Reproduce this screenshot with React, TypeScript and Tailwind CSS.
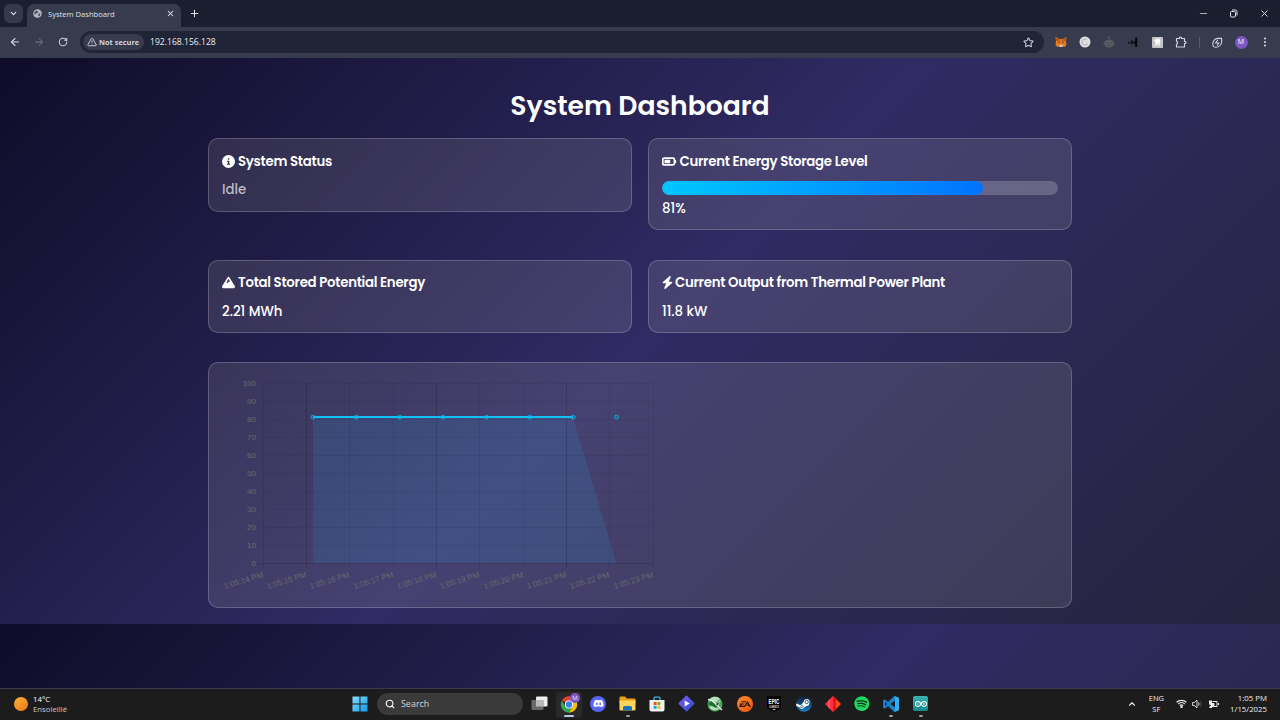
import type { ReactNode } from "react";
import { ArrowLeft, ArrowRight, ChevronDown, ChevronUp, Minus, MoreVertical, Plus, RotateCw, Search, Star, TriangleAlert, X } from "lucide-react";
import { FaBolt, FaCircleInfo, FaDiscord, FaMountain, FaSpotify } from "react-icons/fa6";
import { SiArduino, SiEa } from "react-icons/si";

function TabStrip() {
  return (
    <div className="flex h-[27px] items-end bg-[#1a1f30] text-[#dfe2ec]">
      <div className="mb-[4px] ml-[4px] flex h-[19px] w-[19px] items-center justify-center rounded-[6px] bg-[#343a4b]">
        <ChevronDown size={9} strokeWidth={3} />
      </div>
      <div className="ml-[4px] flex h-[23px] w-[154px] items-center rounded-t-[7px] bg-[#363b4d] pr-[6px] pb-[4px] pl-[6px]">
        <svg width="9" height="9" viewBox="0 0 18 18">
          <circle cx="9" cy="9" r="8.6" fill="#b4b9c4" />
          <path d="M4 5l4-2 2 2-1 3-3 1-1 2-3-2zM11 9l4 0-1 4-3 2-1-3z" fill="#4d5262" />
        </svg>
        <span className="ml-[6px] flex-1 text-[7.6px] leading-[12px]">System Dashboard</span>
        <X size={9} strokeWidth={2.8} />
      </div>
      <Plus className="mb-[8px] ml-[8px]" size={11} strokeWidth={2.2} />
      <div className="flex-1" />
      <div className="mb-[8px] flex items-center">
        <Minus className="mr-[20px]" size={11} strokeWidth={1.6} />
        <svg className="mr-[21px]" width="9" height="9" viewBox="0 0 9 9" fill="none" stroke="currentColor">
          <rect x="1.5" y="2.5" width="5" height="5.5" rx="1" />
          <path d="M3 1h3.5a1.5 1.5 0 0 1 1.5 1.5v4" />
        </svg>
        <X className="mr-[10px]" size={11} strokeWidth={2} />
      </div>
    </div>
  );
}

function ToolCell({ children }: { children: ReactNode }) {
  return <div className="flex w-[24px] items-center justify-center">{children}</div>;
}

function Toolbar() {
  return (
    <div className="flex h-[31px] items-center bg-[#363b4d] text-[#d0d4e0]">
      <div className="flex w-[80px] pb-px pl-[9px]">
        <ArrowLeft size={12} strokeWidth={2.2} />
        <ArrowRight className="ml-[12px] text-[#74798a]" size={12} strokeWidth={2} />
        <RotateCw className="mt-px ml-[13px]" size={10} strokeWidth={2.5} />
      </div>
      <div className="mb-px flex h-[22px] w-[964px] items-center rounded-full bg-[#1f2436] pr-[10px] pl-[3px]">
        <div className="flex h-[16px] w-[61px] items-center rounded-full bg-[#363b4d] pl-[4px]">
          <TriangleAlert size={10} strokeWidth={2.2} />
          <span className="ml-[2px] text-[7.4px] leading-[12px] font-bold whitespace-nowrap">Not secure</span>
        </div>
        <span className="ml-[6px] flex-1 text-[8.6px] leading-[12px] text-[#eceef4]">192.168.156.128</span>
        <Star size={11} strokeWidth={2.2} />
      </div>
      <div className="mb-px ml-[5px] flex h-[16px] items-center">
        <ToolCell>
          <svg width="12" height="12" viewBox="0 0 24 24">
            <path d="M1 2l8 4h6l8-4-1 8 1 7-3 5-5-1h-6l-5 1-3-5 1-7z" fill="#e8781e" />
            <path d="M1 2l8 4 1 5-7-1zM23 2l-8 4-1 5 7-1z" fill="#b3581a" />
            <path d="M8 16l4 2 4-2-1 6H9z" fill="#d8c7b6" />
            <path d="M6 12l4 1-1 2zM18 12l-4 1 1 2z" fill="#26303e" />
          </svg>
        </ToolCell>
        <ToolCell>
          <svg width="12" height="12" viewBox="0 0 24 24">
            <circle cx="12" cy="12" r="11" fill="#dedede" />
            <path d="M16 8a6 6 0 1 0 1 7" fill="none" stroke="#bcbcbc" strokeWidth="2.4" />
          </svg>
        </ToolCell>
        <ToolCell>
          <svg width="12" height="12" viewBox="0 0 24 24" fill="#595b61">
            <circle cx="12" cy="3" r="2.2" />
            <path d="M11 4h2v4h3c3 0 5 3 5 5h2v4h-2c0 3-3 6-6 6H9c-3 0-6-3-6-6H1v-4h2c0-2 2-5 5-5h3z" />
            <path d="M7 13h3v2H7zM14 13h3v2h-3zM8 18h8v2H8z" fill="#454850" />
          </svg>
        </ToolCell>
        <ToolCell>
          <svg width="10" height="10" viewBox="0 0 10 10" fill="#07080c">
            <path d="M0 5h1.600v1.600H0zM2.800 3.500H4.600v3.600H2.800zM5.600 4h1.600V.5h2V10h-2V7H5.600z" />
          </svg>
        </ToolCell>
        <ToolCell>
          <svg width="11" height="11" viewBox="0 0 22 22">
            <rect width="22" height="22" rx="2" fill="#c4c5c7" />
            <path d="M8 4v14M5 8l6-4v6l4-5v6c0 2-3 2-7 2M14 12v6" fill="none" stroke="#fff" strokeWidth="2.4" />
          </svg>
        </ToolCell>
        <ToolCell>
          <svg width="12" height="12" viewBox="0 0 24 24" fill="none" stroke="currentColor" strokeWidth="2.4">
            <path d="M3 5h6V4a2 2 0 0 1 4 0v1h6v6h1a2 2 0 0 1 0 4h-1v7H3v-6c3 0 3-5 0-5z" strokeLinejoin="round" />
          </svg>
        </ToolCell>
        <div className="mx-[5.500px] h-[11px] w-px bg-[#555b70]" />
        <ToolCell>
          <svg width="11" height="11" viewBox="0 0 24 24" fill="none" stroke="currentColor" strokeWidth="2.300">
            <path d="M3 21c-3-7 0-17 9-18h9v9c-1 9-11 12-18 9z" strokeLinejoin="round" />
            <path d="M13 6l-5 7h7l-4 6" />
          </svg>
        </ToolCell>
        <ToolCell>
          <span className="flex h-[13px] w-[13px] items-center justify-center rounded-full bg-[#7e57c2] text-[7px] text-white">M</span>
        </ToolCell>
        <ToolCell>
          <MoreVertical size={12} strokeWidth={2.4} />
        </ToolCell>
      </div>
    </div>
  );
}

function Card({ children, className }: { children: ReactNode; className: string }) {
  return (
    <section className={`rounded-[10px] border border-white/20 bg-[#fff6e6]/11 ${className}`}>
      {children}
    </section>
  );
}

function CardTitle({ icon, children, className }: { icon: ReactNode; children: ReactNode; className: string }) {
  return (
    <h2 className="flex h-[20px] items-center text-[13.33px] leading-[20px] font-semibold tracking-[-0.28px] whitespace-nowrap text-white">
      {icon}
      <span className={className}>{children}</span>
    </h2>
  );
}

function BatteryIcon() {
  return (
    <svg width="14.500" height="13" viewBox="0 0 14.500 13" fill="#fff">
      <rect x=".8" y="3.100" width="11.600" height="6.800" rx="1.300" fill="none" stroke="#fff" strokeWidth="1.700" />
      <path d="M2.500 4.800h5.700v3.500H2.500zM12.800 4.900h.7a.7.700 0 0 1 .7.700v2a.7.700 0 0 1-.7.700h-.7z" />
    </svg>
  );
}

const TICKS = [
  { sec: 14, x: 54.5 },
  { sec: 15, x: 97.5 },
  { sec: 16, x: 140.5 },
  { sec: 17, x: 184.5 },
  { sec: 18, x: 227.5 },
  { sec: 19, x: 270.5 },
  { sec: 20, x: 314.5 },
  { sec: 21, x: 357.5 },
  { sec: 22, x: 400.5 },
  { sec: 23, x: 444.5 },
];
const LEVELS = [100, 90, 80, 70, 60, 50, 40, 30, 20, 10, 0];
const POINTS = [0, 1, 2, 3, 4, 5, 6, 7];

function Chart() {
  return (
    <svg className="block" width="450" height="244" viewBox="0 0 450 244" fontFamily="'Liberation Sans', Arial, sans-serif" fontSize="8">
      <path d="M104 54.500H364L407.300 200H104z" fill="#1cb4ff" fillOpacity=".125" />
      {LEVELS.map((level, i) => (
        <g key={level}>
          <path d={`M49 ${20.5 + i * 18}H444`} stroke="#000" strokeOpacity={level === 0 ? 0.14 : 0.06} />
          <text x="47" y={22.5 + i * 18} textAnchor="end" fill="#6a6a6e">{level}</text>
        </g>
      ))}
      {TICKS.map(({ sec, x }, i) => (
        <g key={sec}>
          <path d={`M${x} 20V205`} stroke="#000" strokeOpacity={i % 3 === 1 ? 0.15 : 0.07} />
          <text transform={`translate(${x + 0.3} 214) rotate(-17)`} textAnchor="end" fill="#6a6a6e">{`1:05:${sec} PM`}</text>
        </g>
      ))}
      <path d="M104 54H364" stroke="#12c0f8" strokeWidth="2" />
      {POINTS.map((p) => (
        <circle key={p} cx={104 + p * 43.36} cy="54.200" r="2" fill="#00c6ff" fillOpacity=".15" stroke="#12a9e0" strokeWidth=".9" />
      ))}
    </svg>
  );
}

function Dashboard() {
  return (
    <main className="h-[630px] bg-[linear-gradient(135deg,#0f0c29,#302b63,#24243e)] bg-[length:1280px_566px] bg-repeat-y font-['Poppins','Inter',sans-serif]">
      <div className="mx-auto flex w-[864px] flex-col">
        <h1 className="mt-[28px] h-[40px] text-center text-[26.67px] leading-[40px] font-semibold whitespace-nowrap text-white">
          System Dashboard
        </h1>
        <div className="mt-[12px] grid grid-cols-2 items-start gap-x-[16px] gap-y-[29.5px]">
          <Card className="h-[73.500px] px-[13px] pt-[12.500px]">
            <CardTitle icon={<FaCircleInfo size={13} />} className="ml-[3px]">System Status</CardTitle>
            <p className="mt-[8.500px] text-[13.33px] leading-[20px] font-medium text-[#bcb9c7]">Idle</p>
          </Card>
          <Card className="h-[92px] px-[13px] pt-[12.500px]">
            <CardTitle icon={<BatteryIcon />} className="ml-[3px]">Current Energy Storage Level</CardTitle>
            <div className="mt-[9.500px] h-[13.500px] overflow-hidden rounded-full bg-white/20">
              <div className="h-full w-[81%] rounded-full bg-linear-to-r from-[#00c6ff] to-[#0072ff]" />
            </div>
            <p className="mt-[4px] text-[13.33px] leading-[20px] font-medium text-white">81%</p>
          </Card>
          <Card className="h-[73.500px] px-[13px] pt-[12px]">
            <CardTitle icon={<FaMountain size={13} />} className="ml-[3px]">Total Stored Potential Energy</CardTitle>
            <p className="mt-[9px] text-[13.33px] leading-[20px] font-medium text-white">2.21 MWh</p>
          </Card>
          <Card className="h-[73.500px] px-[13px] pt-[12px]">
            <CardTitle icon={<FaBolt size={13} className="-mx-[1.500px]" />} className="ml-[3px]">Current Output from Thermal Power Plant</CardTitle>
            <p className="mt-[9px] text-[13.33px] leading-[20px] font-medium text-white">11.8 kW</p>
          </Card>
        </div>
        <Card className="mt-[29px] h-[246px]">
          <Chart />
        </Card>
      </div>
    </main>
  );
}

function TaskCell({ children, state = "" }: { children: ReactNode; state?: "" | "active" | "open" }) {
  return (
    <div className="flex w-[29.3px] justify-center">
      <div className={`flex h-[26px] w-[26px] flex-col items-center rounded-[3px] pt-[3px] ${state === "active" ? "bg-white/6" : ""}`}>
        <div className="flex h-[18px] items-center justify-center">{children}</div>
        {state === "active" && <div className="mt-[2px] h-[2px] w-[10px] rounded-full bg-[#b5c7da]" />}
        {state === "open" && <div className="mt-[2px] h-[2px] w-[4px] rounded-full bg-[#9a9a9a]" />}
      </div>
    </div>
  );
}

function Taskbar() {
  return (
    <footer className="grid h-[32px] grid-cols-[345.3px_1fr_170px] items-center border-t border-[#3d3b49] bg-[#1c1c1c] text-white">
      <div className="flex items-center pb-[2px] pl-[14px]">
        <div className="h-[14px] w-[14px] rounded-full bg-linear-[145deg] from-[#f9b23c] to-[#ee7414]" />
        <div className="ml-[5px] text-[7.800px] leading-[10px]">
          <p>14°C</p>
          <p className="text-[#c9c9c9]">Ensoleillé</p>
        </div>
      </div>
      <div className="flex items-center">
        <TaskCell>
          <svg width="16" height="16" viewBox="0 0 16 16">
            <defs>
              <linearGradient id="win" x1="0" y1="0" x2="1" y2="1"><stop stopColor="#83e0ff" /><stop offset="1" stopColor="#1197e6" /></linearGradient>
            </defs>
            <path d="M.5.5h7v7h-7zM8.500.5h7v7h-7zM.5 8.500h7v7h-7zM8.500 8.500h7v7h-7z" fill="url(#win)" />
          </svg>
        </TaskCell>
        <div className="mx-[2.300px] mb-px flex h-[22px] w-[146px] items-center rounded-full bg-[#3a3a3a] pl-[8px]">
          <Search size={10} strokeWidth={2.600} />
          <span className="ml-[6px] text-[9px] leading-[12px] text-[#d4d4d4]">Search</span>
        </div>
        <TaskCell>
          <svg width="17" height="15" viewBox="0 0 17 15">
            <rect x="5" y=".5" width="11.500" height="10" rx="1" fill="#eee" />
            <rect x=".5" y="4" width="12" height="10" rx="1" fill="#777" fillOpacity=".85" />
            <rect x="5" y="4" width="7.500" height="6.500" fill="#b8b8b8" />
          </svg>
        </TaskCell>
        <TaskCell state="active">
          <svg width="21" height="20" viewBox="0 0 21 20" className="overflow-visible">
            <g transform="translate(10 10.500)">
              <path d="M0 0L-7.100-4.100A8.200 8.200 0 0 1 7.100-4.100L0-4.100z" fill="#e94235" />
              <path d="M-7.100-4.100A8.200 8.200 0 0 0 0 8.200L3.600 2-3.600 2z" fill="#31a752" />
              <path d="M7.100-4.100A8.200 8.200 0 0 1 0 8.200L3.600 2 0-4.100z" fill="#fbbc05" />
              <circle r="4.100" fill="#fff" />
              <circle r="3.200" fill="#3d80ee" />
            </g>
            <circle cx="16" cy="4" r="5" fill="#7e57c2" />
            <text x="16" y="6.300" textAnchor="middle" fontSize="6" fill="#e9e0f7">M</text>
          </svg>
        </TaskCell>
        <TaskCell>
          <span className="flex h-[16px] w-[16px] items-center justify-center rounded-full bg-[#5865f2]"><FaDiscord size={11} /></span>
        </TaskCell>
        <TaskCell state="open">
          <svg width="17" height="15" viewBox="0 0 17 15">
            <path d="M.5 1.500a1 1 0 0 1 1-1H6l2 2h7.500a1 1 0 0 1 1 1V7H.5z" fill="#e5a11c" />
            <path d="M.5 4.500h16v9a1 1 0 0 1-1 1h-14a1 1 0 0 1-1-1z" fill="#ffd45a" />
            <path d="M4 14.500v-3a1.500 1.500 0 0 1 1.500-1.500h6a1.500 1.500 0 0 1 1.500 1.500v3z" fill="#1673b8" />
          </svg>
        </TaskCell>
        <TaskCell>
          <svg width="16" height="16" viewBox="0 0 16 16">
            <path d="M5 4V2.200a1 1 0 0 1 1-1h4a1 1 0 0 1 1 1V4" fill="none" stroke="#39b4e6" strokeWidth="1.300" />
            <path d="M.5 4h15v9.500a2 2 0 0 1-2 2h-11a2 2 0 0 1-2-2z" fill="#f1f1f1" />
            <path d="M4.600 6h3v3h-3z" fill="#f05125" />
            <path d="M8.400 6h3v3h-3z" fill="#7eb900" />
            <path d="M4.600 9.800h3v3h-3z" fill="#1ca3e8" />
            <path d="M8.400 9.800h3v3h-3z" fill="#fdb813" />
          </svg>
        </TaskCell>
        <TaskCell>
          <svg width="17" height="17" viewBox="0 0 17 17">
            <defs>
              <linearGradient id="clip" x1="0" y1="0" x2="1" y2="1"><stop stopColor="#7a5cf5" /><stop offset="1" stopColor="#2c4ecb" /></linearGradient>
            </defs>
            <path d="M8.500 1.200L15.800 8.500 8.500 15.800 1.200 8.500z" fill="url(#clip)" stroke="url(#clip)" strokeWidth="1.500" strokeLinejoin="round" />
            <path d="M6.700 5.500l5 3-5 3z" fill="#fff" />
          </svg>
        </TaskCell>
        <TaskCell>
          <svg width="17" height="16" viewBox="0 0 17 16">
            <circle cx="8" cy="8" r="7.500" fill="#49a858" />
            <path d="M2 4c3-4 8-4 11-1l-5 4z" fill="#b9dfbe" />
            <path d="M2 11c2 4 7 4 10 2L7 9z" fill="#b7ddb9" />
            <path d="M1 8l4-3 6 5-2 2z" fill="#1f6e36" />
            <path d="M1 3.500l4 1 10 9.500" fill="none" stroke="#e5eee6" strokeWidth="1.400" />
            <path d="M8 8l5-3-2 5z" fill="#1c4f2a" stroke="#f1f7f1" strokeWidth=".6" />
          </svg>
        </TaskCell>
        <TaskCell>
          <span className="flex h-[16px] w-[16px] items-center justify-center rounded-full bg-linear-to-br from-[#ff8a28] to-[#ec520f] text-[#25120b]"><SiEa size={12} /></span>
        </TaskCell>
        <TaskCell>
          <svg width="14" height="16" viewBox="0 0 14 16" fontFamily="'Liberation Sans', sans-serif" fontWeight="700" fill="#fff" textAnchor="middle">
            <path d="M1 0h12a1 1 0 0 1 1 1v11.500L7 16l-7-3.500V1a1 1 0 0 1 1-1z" fill="#030303" />
            <text transform="translate(7 8) scale(.78 1.250)" fontSize="6">EPIC</text>
            <text x="7" y="11.500" fontSize="2.700" fill="#ccc">GAMES</text>
            <path d="M5 13.300h4l-2 1z" />
          </svg>
        </TaskCell>
        <TaskCell>
          <svg width="16" height="16" viewBox="0 0 16 16">
            <defs>
              <linearGradient id="steam" x1="0" y1="0" x2="0" y2="1"><stop stopColor="#101c3b" /><stop offset="1" stopColor="#1680bb" /></linearGradient>
            </defs>
            <circle cx="8" cy="8" r="7.800" fill="url(#steam)" />
            <path d="M0 7.500l4 1.600 1.500-.4 2.600-3.500h4.700v4L8.500 11a2.400 2.400 0 0 1-4.600.4L.5 10z" fill="#fff" />
            <circle cx="10.700" cy="5.900" r="2.900" fill="#fff" />
            <circle cx="10.700" cy="5.900" r="1.700" fill="#eef4f8" stroke="#183b64" strokeWidth=".8" />
            <circle cx="6" cy="10.800" r="1.300" fill="none" stroke="#1a5689" strokeWidth=".7" />
          </svg>
        </TaskCell>
        <TaskCell>
          <svg width="16" height="16" viewBox="0 0 16 16">
            <path d="M8 0L0 8l8 8z" fill="#ff3048" />
            <path d="M8 0l8 8-8 8z" fill="#ff4b17" />
            <path d="M8 0l3 3v10l-3 3z" fill="#f20f10" />
            <path d="M3 5l2-2v10l-2-2z" fill="#ff4560" />
          </svg>
        </TaskCell>
        <TaskCell><FaSpotify size={15.500} className="rounded-full bg-[#12331e] text-[#1ed760]" /></TaskCell>
        <TaskCell state="open">
          <svg width="16" height="16" viewBox="0 0 24 24">
            <path d="M17 0L7.600 8.900 3 5.300 0 6.700v10.600l3 1.400 4.600-3.600L17 24l7-3V3zM3 9l3 3-3 3zM18 7v10l-7-5z" fill="#1683cf" fillRule="evenodd" />
            <path d="M17 0l7 3v18l-7 3 1-3V3z" fill="#32aef5" />
          </svg>
        </TaskCell>
        <TaskCell state="open">
          <span className="flex h-[15px] w-[15px] items-center justify-center rounded-[2px] bg-linear-to-b from-[#38b2b0] to-[#16898c]"><SiArduino size={12} /></span>
        </TaskCell>
      </div>
      <div className="flex items-center justify-end pr-[13px] pb-[2px] text-[7.800px] leading-[10.500px] text-[#ececec]">
        <ChevronUp size={10} strokeWidth={2.600} />
        <div className="ml-[12px] text-center text-[7.500px]"><p>ENG</p><p>SF</p></div>
        <div className="ml-[12px] flex items-center gap-[5px]">
          <svg width="11" height="9" viewBox="0 0 11 9" fill="none" stroke="currentColor" strokeWidth="1.200">
            <path d="M.6 3.300a7 7 0 0 1 9.800 0M2.200 5a4.700 4.700 0 0 1 6.600 0M3.800 6.600a2.500 2.500 0 0 1 3.400 0" />
            <circle cx="5.500" cy="7.900" r=".6" fill="currentColor" />
          </svg>
          <svg width="11" height="10" viewBox="0 0 11 10" fill="none" stroke="currentColor" strokeWidth=".9">
            <path d="M.6 3.500h1.700L5 1.200v7.600L2.300 6.500H.6zM6.500 3.400a2.300 2.300 0 0 1 0 3.200" />
            <path d="M8 2a4.200 4.200 0 0 1 0 6" stroke="#555" />
          </svg>
          <svg width="11" height="10" viewBox="0 0 11 10" fill="none" stroke="currentColor">
            <path d="M4.500 2.500H9v5H2.500M10.500 4v2" />
            <path d="M1 1.500h3v3a1.500 1.500 0 0 1-3 0zM2 7h2v2H1z" fill="currentColor" stroke="none" />
            <path d="M3 4.500h3v2H3z" fill="currentColor" />
          </svg>
        </div>
        <div className="ml-[11px] w-[37px] text-right whitespace-nowrap"><p>1:05 PM</p><p className="-ml-[4px]">1/15/2025</p></div>
      </div>
    </footer>
  );
}

export default function App() {
  return (
    <div className="flex h-[720px] w-[1280px] flex-col overflow-hidden font-['Segoe_UI','Open_Sans','Noto_Sans',sans-serif]">
      <TabStrip />
      <Toolbar />
      <Dashboard />
      <Taskbar />
    </div>
  );
}
